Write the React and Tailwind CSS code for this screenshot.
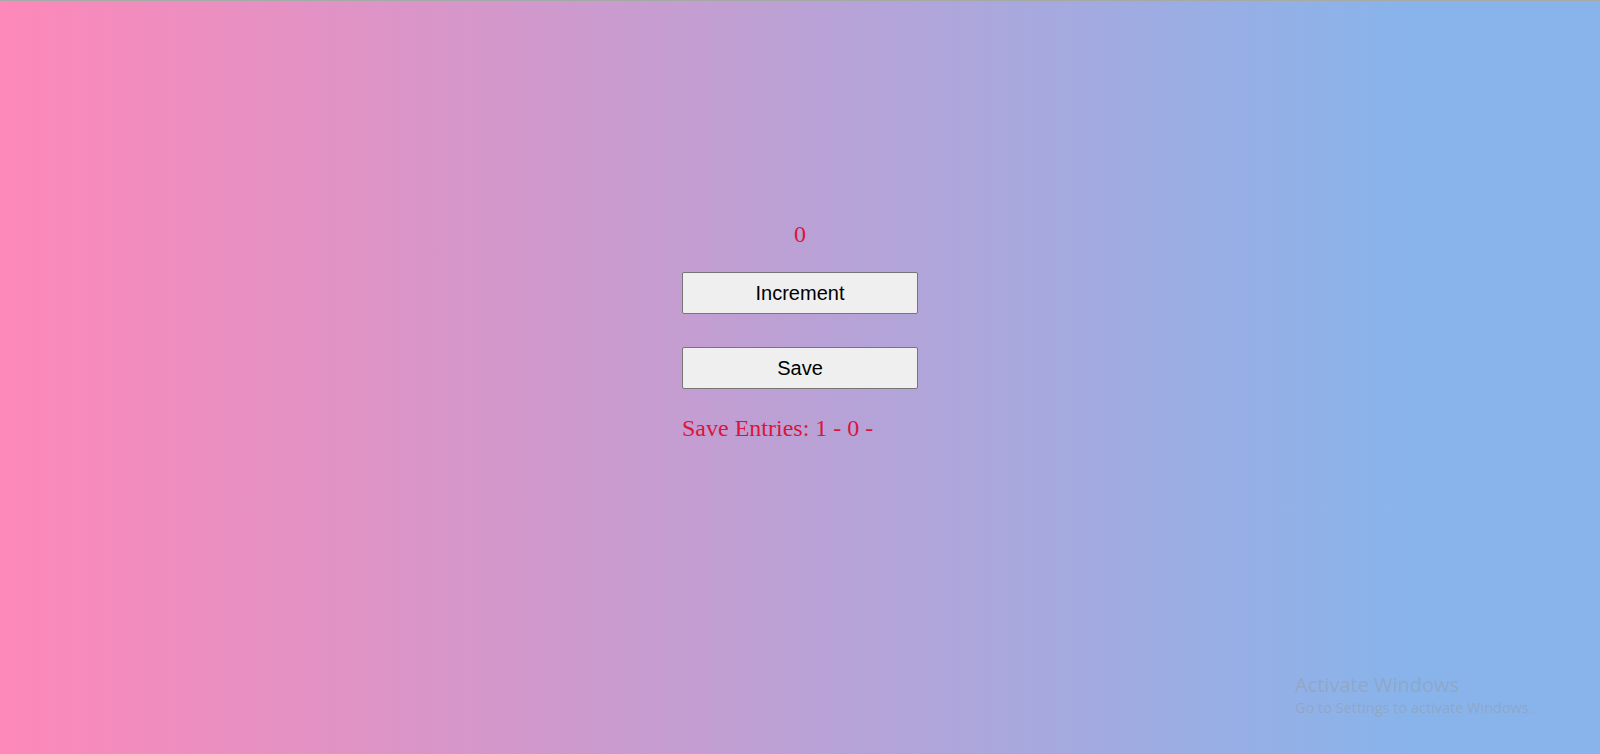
import React, { useState } from 'react';

function App() {
  const [count, setCount] = useState(0);
  const [entries, setEntries] = useState([1, 0]);

  const handleSave = () => {
    setEntries([...entries, count]);
  };

  return (
    <div className="relative h-[754px] w-full overflow-hidden border-t border-[#a6aaa6] bg-[linear-gradient(to_right,#fd88b9_0%,#88b4eb_88%)]">
      <div className="flex flex-col items-center pt-[219px]">
        <div className="w-[236px]">
          <p className="text-center font-['Liberation_Serif',serif] text-[24px] leading-[28px] text-[#dc143c]">
            {count}
          </p>

          <button
            onClick={() => setCount(count + 1)}
            className="mt-[24px] block h-[42px] w-full rounded-[2px] border border-[#767676] bg-[#efefef] font-['Liberation_Sans',Arial,sans-serif] text-[20px] text-black"
          >
            Increment
          </button>

          <button
            onClick={handleSave}
            className="mt-[33px] block h-[42px] w-full rounded-[2px] border border-[#767676] bg-[#efefef] font-['Liberation_Sans',Arial,sans-serif] text-[20px] text-black"
          >
            Save
          </button>

          <p className="mt-[25px] whitespace-nowrap font-['Liberation_Serif',serif] text-[24px] leading-[28px] text-[#dc143c]">
            Save Entries: {entries.map((e, i) => (
              <span key={i}>{e} - </span>
            ))}
          </p>
        </div>
      </div>

      {/* windows watermark */}
      <div className="pointer-events-none absolute left-[1295px] top-[671px] font-['Open_Sans',sans-serif] text-[rgba(150,150,150,0.42)]">
        <p className="text-[20px] leading-[26px]">Activate Windows</p>
        <p className="text-[14.5px] leading-[20px]">Go to Settings to activate Windows.</p>
      </div>
    </div>
  );
}

export default App;
